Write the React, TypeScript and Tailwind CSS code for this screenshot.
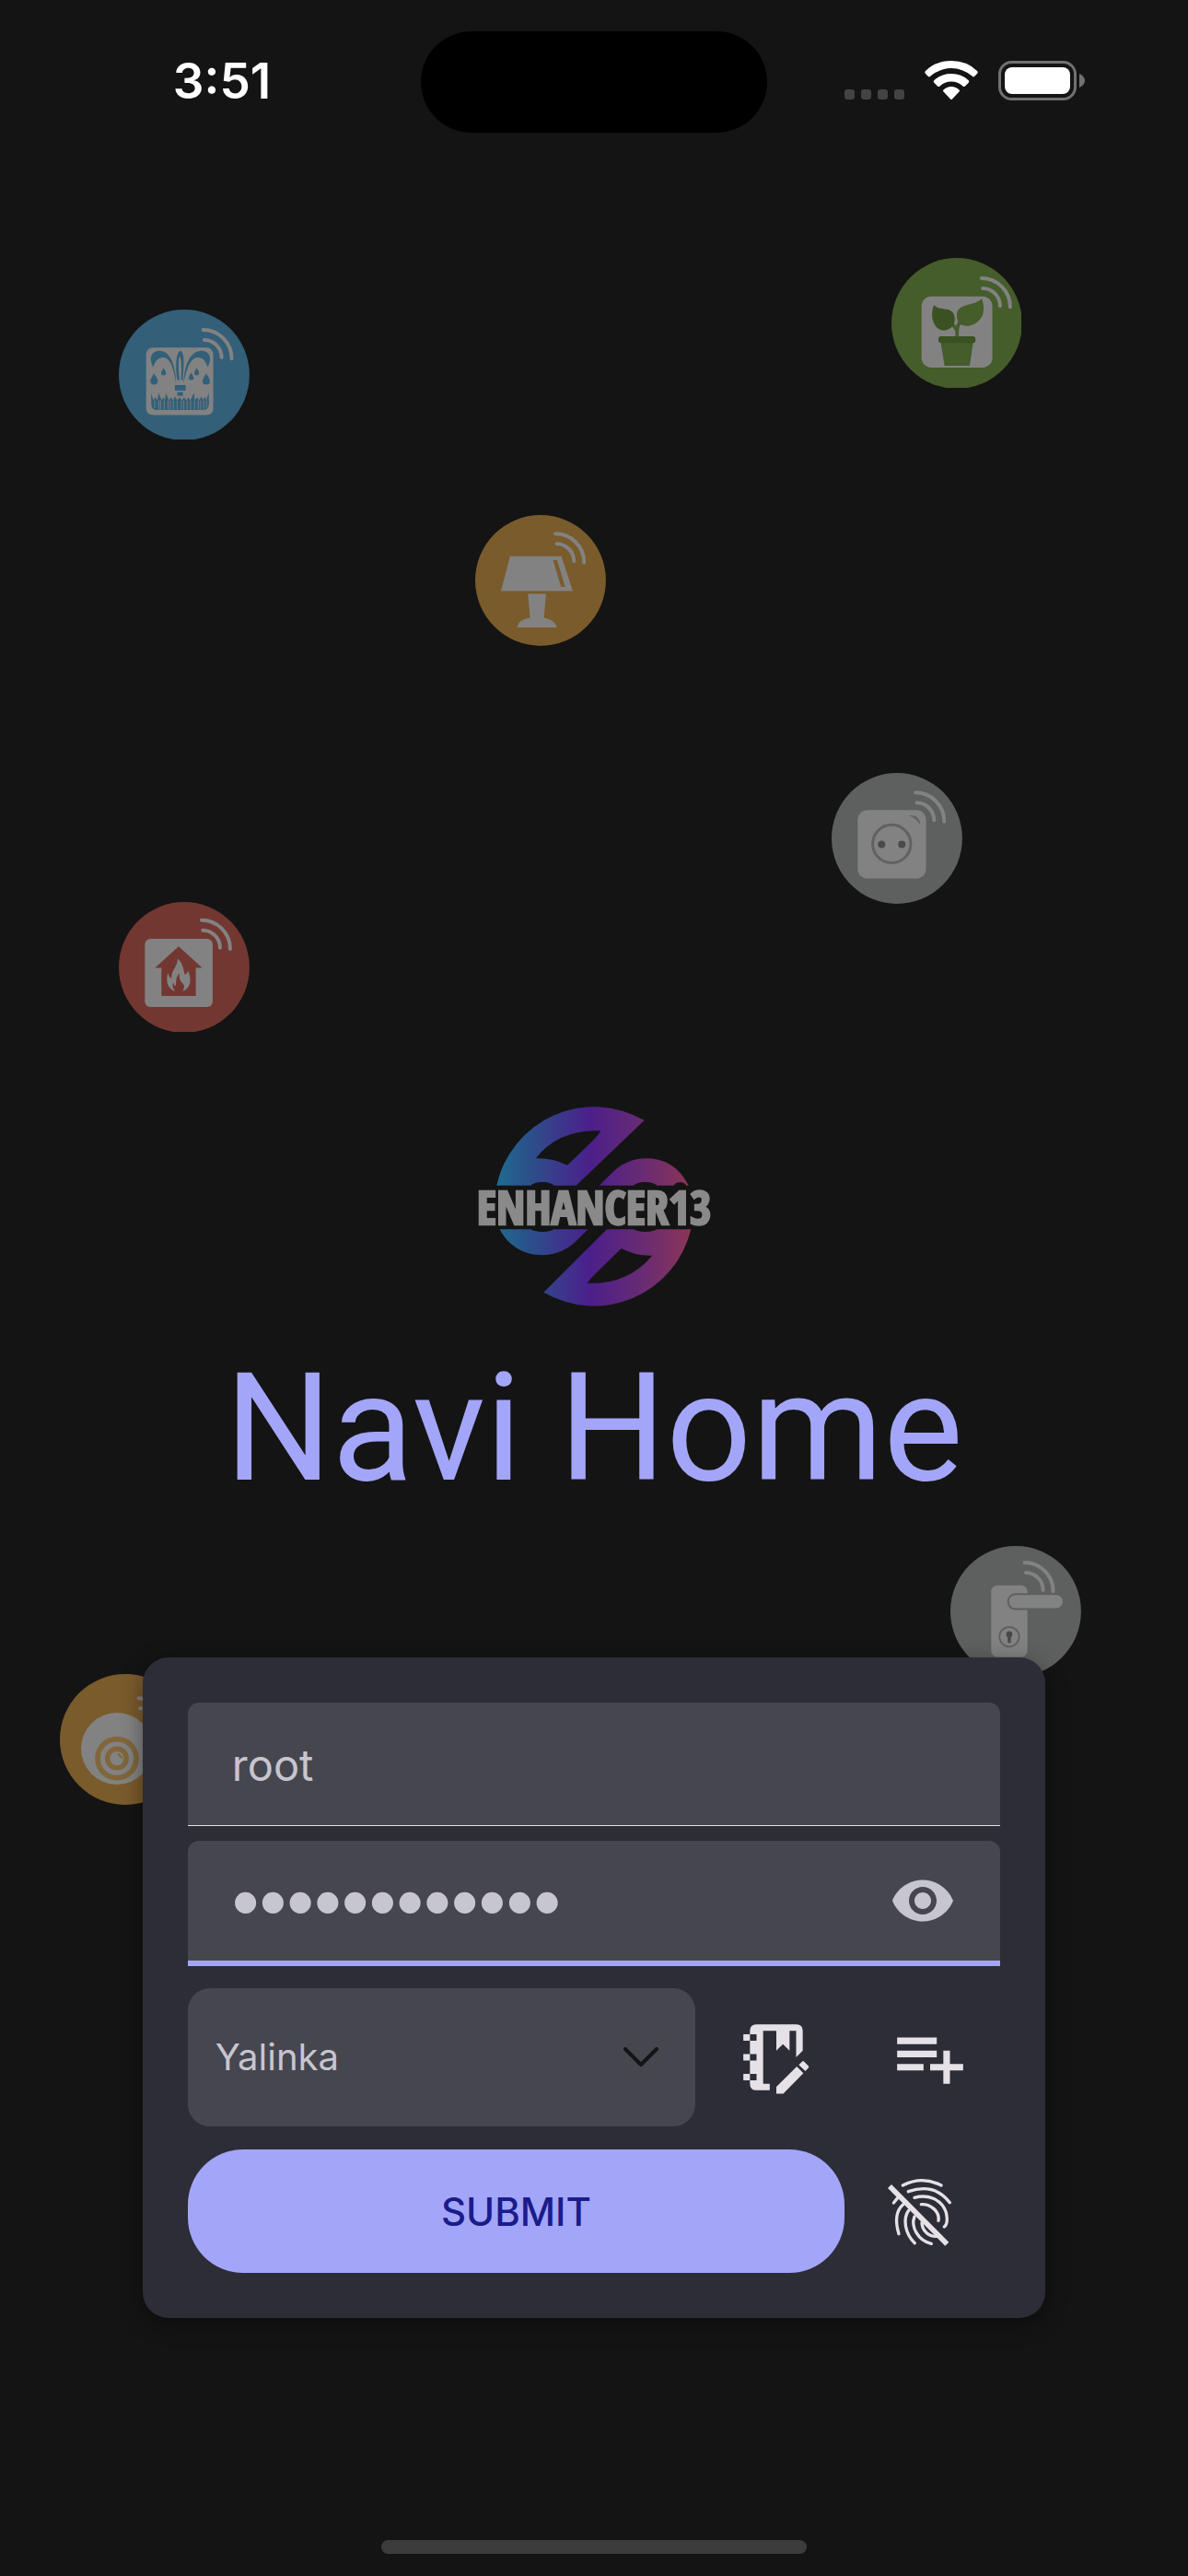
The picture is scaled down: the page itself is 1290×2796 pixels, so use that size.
import { useState } from "react";
import type { ReactNode } from "react";
import { MdVisibility } from "react-icons/md";

function Waves({ x, y }: { x: number; y: number }) {
  return (
    <g transform={`translate(${x} ${y})`} fill="none" stroke="#828282" strokeWidth="12" strokeLinecap="round">
      <path d="M0 0A93 94 0 0 1 93 94" />
      <path d="M4 33A57 57 0 0 1 60 90" />
    </g>
  );
}

function Disc({ place, box, color, children }: { place: string; box: string; color: string; children: ReactNode }) {
  const [x, y] = box.split(" ").map(Number);
  return (
    <svg className={`absolute w-[11%] ${place}`} viewBox={box} aria-hidden="true">
      <circle cx={x + 213} cy={y + 213} r="213" fill={color} />
      {children}
    </svg>
  );
}

function Devices() {
  return (
    <div className="pointer-events-none absolute inset-0">
      <Disc place="left-[10%] top-[12%]" box="87 78 426 426" color="#335f78">
        <Waves x={362} y={144} />
        <rect x="176" y="202" width="219" height="220" rx="22" fill="#828282" />
        <g fill="#335f78">
          <path d="M200 266C186 244 188 218 212 213C250 206 272 250 274 320C266 268 254 234 232 234C216 234 204 246 200 266Z" />
          <path d="M376 266C390 244 388 218 364 213C326 206 300 250 298 320C308 268 322 234 344 234C360 234 372 246 376 266Z" />
          <path d="M278 308C270 262 274 214 288 213C302 214 300 262 295 308L290 308C293 270 290 232 286 232C280 234 281 270 285 308Z" />
          <path d="M202 286Q214 304 214 311A12 12 0 0 1 190 311Q190 304 202 286Z" />
          <path d="M372 286Q384 304 384 311A12 12 0 0 1 360 311Q360 304 372 286Z" />
          <path d="M233 268Q241 281 241 285A8 7 0 0 1 225 285Q225 281 233 268Z" />
          <path d="M341 268Q349 281 349 285A8 7 0 0 1 333 285Q333 281 341 268Z" />
          <path d="M323 284Q331 297 331 301A8 7 0 0 1 315 301Q315 297 323 284Z" />
          <rect x="270" y="324" width="35" height="18" />
          <rect x="278" y="347" width="18" height="12" />
          <path d="M192 350L200 374L206 364L213 374L217 350L227 374L233 364L237 374L241 350L250 374L257 364L264 374L270 362L278 374L285 364L293 374L300 364L308 374L314 364L320 374L332 350L335 374L343 364L349 374L356 362L362 372L368 362L372 374L380 350L381 385Q380 400 368 405L206 405Q193 402 193 385Z" />
        </g>
        <path d="M204 374V400M217 374V404M223 374V404M235 374V404M248 374V404M255 374V404M265 374V404M277 374V404M291 374V404M299 374V404M310 374V404M321 374V404M334 374V404M346 374V404M354 374V404M364 374V404M373 374V397" stroke="#828282" strokeWidth="2.5" />
      </Disc>

      <Disc place="left-[75%] top-[10%]" box="84 60 426 426" color="#455c2b">
        <rect x="182" y="185" width="231" height="232" rx="32" fill="#828282" />
        <Waves x={378} y={126} />
        <path d="M298 318V300Q298 280 312 258M298 298Q292 284 282 276" fill="none" stroke="#455c2b" strokeWidth="11" />
        <path d="M223 213C238 234 284 214 290 252C294 288 264 300 246 295C214 284 211 238 223 213Z" fill="#3a5122" />
        <path d="M378 193C356 218 300 206 297 244C296 262 302 268 308 276C338 290 370 274 382 244C387 224 384 206 378 193Z" fill="#455c2b" />
        <path d="M244 330H351L339 411H257Z" fill="#455c2b" />
        <rect x="237" y="315" width="121" height="22" rx="9" fill="#3a5122" />
      </Disc>

      <Disc place="left-[40%] top-[20%]" box="78 57 426 426" color="#7a5b2c">
        <Waves x={340} y={118} />
        <g fill="#828282">
          <path d="M192 191H359L396 305H162Z" />
          <path d="M250 314H309L302 392Q337 398 345 423H214Q221 396 257 392Z" />
        </g>
        <path d="M332 204H345L371 291H358Z" fill="#7a5b2c" />
      </Disc>

      <Disc place="left-[70%] top-[30%]" box="69 57 426 426" color="#5e605f">
        <rect x="154" y="178" width="223" height="223" rx="32" fill="#828282" />
        <Waves x={343} y={121} />
        <circle cx="265" cy="288" r="62" fill="none" stroke="#616161" strokeWidth="9" />
        <circle cx="232" cy="290" r="12" fill="#4a4a4a" />
        <circle cx="298" cy="290" r="12" fill="#4a4a4a" />
        <path d="M320 196Q355 190 358 226Q342 202 320 196Z" fill="#616161" />
      </Disc>

      <Disc place="left-[10%] top-[35%]" box="57 57 426 426" color="#733731">
        <Waves x={327} y={116} />
        <rect x="142" y="177" width="221" height="222" rx="18" fill="#828282" />
        <path d="M252 202L329 272H308V363H196V272H175Z" fill="#733731" />
        <path d="M241 348C214 340 210 312 217 288Q220 302 229 308C226 280 248 272 249 242C262 252 268 272 272 294Q280 292 282 280C296 308 292 340 265 348C276 330 266 322 262 320Q254 312 254 290Q242 302 243 330Q236 330 235 320C230 330 234 340 241 348Z" fill="#828282" />
      </Disc>

      <Disc place="left-[80%] top-[60%]" box="96 84 426 426" color="#5e605f">
        <Waves x={338} y={138} />
        <rect x="229" y="212" width="118" height="234" rx="20" fill="#828282" />
        <rect x="284" y="241" width="181" height="49" rx="24" fill="#828282" stroke="#5e605f" strokeWidth="6" />
        <circle cx="288" cy="380" r="32" fill="none" stroke="#616161" strokeWidth="6" />
        <circle cx="288" cy="372" r="10" fill="#484848" />
        <rect x="283" y="376" width="10" height="24" rx="3" fill="#484848" />
      </Disc>

      <Disc place="left-[5%] top-[65%]" box="45 81 426 426" color="#7a5b2c">
        <Waves x={302} y={160} />
        <circle cx="231" cy="324" r="117" fill="#828282" />
        <g fill="none" stroke="#80663a">
          <circle cx="231" cy="356" r="63" strokeWidth="17" />
          <circle cx="231" cy="356" r="31" strokeWidth="16" />
          <path d="M236 342L247 353" strokeWidth="6" strokeLinecap="round" />
        </g>
      </Disc>
    </div>
  );
}

function Logo() {
  return (
    <svg className="w-[310px]" viewBox="0 0 930 780" role="img" aria-label="ENHANCER13">
      <defs>
        <linearGradient id="brand" gradientUnits="userSpaceOnUse" x1="148" y1="0" x2="782" y2="0">
          <stop offset="0" stopColor="#1f6b8f" />
          <stop offset="0.14" stopColor="#29548a" />
          <stop offset="0.48" stopColor="#4b1f8b" />
          <stop offset="0.75" stopColor="#692b73" />
          <stop offset="1" stopColor="#8b3557" />
        </linearGradient>
      </defs>
      <g fill="url(#brand)" fillRule="evenodd">
        <path d="M148 320A325 325 0 0 1 629 108L407 320ZM275 232Q330 230 378 254L450 185Q476 162 487 142Q350 136 275 232Z" />
        <path d="M158 463C185 515 235 547 295 547C345 547 385 524 410 498L446 463Z" />
        <path d="M482 320L530 273C560 245 600 232 635 232C700 232 745 265 773 320Z" />
        <path d="M507 463L301 668A325 325 0 0 0 781 463ZM554 525Q600 550 655 548Q575 644 443 638Q455 620 475 602Z" />
      </g>
      <g fill="#141414">
        <ellipse cx="297" cy="324" rx="38" ry="15" />
        <ellipse cx="632" cy="324" rx="38" ry="15" />
        <ellipse cx="297" cy="458" rx="38" ry="13" />
        <ellipse cx="632" cy="458" rx="38" ry="13" />
        <ellipse cx="745" cy="322" rx="20" ry="12" />
      </g>
      <text x="465" y="446" textAnchor="middle" fontFamily="'Open Sans Condensed', 'Open Sans', sans-serif" fontWeight="800" fontSize="150" fill="#8a8a8a" stroke="#8a8a8a" strokeWidth="7">
        ENHANCER13
      </text>
    </svg>
  );
}

function NotebookEdit() {
  return (
    <svg className="size-[86px]" viewBox="0 0 24 24" fill="currentColor" aria-hidden="true">
      <path fillRule="evenodd" d="M4 5V4Q4 2 6 2H18Q20 2 20 4V10L18 12V4H16V10L14 8L12 10V4H8V20H10V22H6Q4 22 4 20V19H6V17H4V13H6V11H4V7H6V5Z" />
      <path d="M2 5H4V7H2ZM2 11H4V13H2ZM2 17H4V19H2Z" />
      <path d="M12 23V20.9L18.2 14.8L20.2 16.8L14.1 23ZM18.8 14.3L19.8 13.3Q20.1 13 20.4 13.3L21.7 14.6Q22 14.9 21.7 15.2L20.8 16.2Z" />
    </svg>
  );
}

function PlaylistPlus() {
  return (
    <svg className="size-[86px]" viewBox="0 0 24 24" fill="currentColor" aria-hidden="true">
      <path d="M2 6H14V8H2ZM2 10H14V12H2ZM2 14H10V16H2ZM12 14H16V10H18V14H22V16H18V20H16V16H12Z" />
    </svg>
  );
}

function FingerprintOff() {
  return (
    <svg className="size-[86px]" viewBox="525 561 258 258" fill="none" stroke="currentColor" strokeWidth="10" strokeLinecap="round" aria-hidden="true">
      <path d="M601 606Q664 574 726 606" />
      <path d="M619 626Q704 597 754 662" />
      <path d="M639 646C680 634 728 650 742 694Q750 730 736 741" />
      <path d="M661 668C690 666 722 690 717 721" />
      <path d="M571 663L584 647" />
      <path d="M602 668Q568 698 588 764" />
      <path d="M620 688C600 714 608 764 640 794" />
      <path d="M639 708C626 740 650 786 694 796" />
      <path d="M663 728C664 754 686 774 712 772" />
      <path d="M558 609L745 797" strokeWidth="17" strokeLinecap="butt" />
    </svg>
  );
}

function StatusBar() {
  return (
    <header className="relative grid h-[178px] grid-cols-[1fr_376px_1fr] items-start pt-[34px] text-white">
      <div className="flex h-[108px] items-center justify-center pl-[25px] text-[53px] font-semibold leading-none">3:51</div>
      <div className="h-[110px] rounded-full bg-black" />
      <div className="flex h-[106px] items-center justify-end gap-[22px] pr-[112px]">
        <div className="flex gap-[7px] pt-[30px]">
          <i className="size-[11px] rounded-[3px] bg-[#434343]" />
          <i className="size-[11px] rounded-[3px] bg-[#434343]" />
          <i className="size-[11px] rounded-[3px] bg-[#434343]" />
          <i className="size-[11px] rounded-[3px] bg-[#434343]" />
        </div>
        <svg className="w-[58px]" viewBox="0 0 58 42" fill="#fff" aria-label="Wi-Fi">
          <path d="M29 0Q46 0 57 11Q58.500 12.500 57 14L54 17Q53 18 51.500 16.500Q41 8 29 8Q17 8 6.500 16.500Q5 18 4 17L1 14Q-.5 12.500 1 11Q12 0 29 0Z" />
          <path d="M29 14Q40 14 47.500 21Q49 22.500 47.500 24L44 27.500Q43 28.500 41.500 27.500Q36 22.500 29 22.500Q22 22.500 16.500 27.500Q15 28.500 14 27.500L10.500 24Q9 22.500 10.500 21Q18 14 29 14Z" />
          <path d="M29 28Q34 28 37.500 31.500Q38.500 32.500 37.500 33.500L30 41.500Q29 42.500 28 41.500L20.500 33.500Q19.500 32.500 20.500 31.500Q24 28 29 28Z" />
        </svg>
        <svg className="w-[94px]" viewBox="0 0 94 43" aria-label="Battery">
          <rect x="1.500" y="1.500" width="82" height="40" rx="13" fill="none" stroke="#717171" strokeWidth="3" />
          <rect x="7" y="7" width="71" height="29" rx="8" fill="#fff" />
          <path d="M88 14Q94 17 94 21.500Q94 26 88 29Z" fill="#717171" />
        </svg>
      </div>
    </header>
  );
}

export default function App() {
  const [shown, setShown] = useState(false);
  return (
    <div className="relative flex min-h-screen flex-col bg-[#141414] font-['Inter',sans-serif]">
      <Devices />
      <StatusBar />
      <main className="relative mt-auto flex flex-col items-center">
        <Logo />
        <h1 className="mb-[137px] font-['Roboto',sans-serif] text-[163px] leading-[222px] text-[#a3a6f8]">Navi Home</h1>
        <form className="flex w-[76%] flex-col rounded-[28px] bg-[#2d2d37] p-[49px] shadow-[0_6px_24px_rgba(0,0,0,0.4)]" onSubmit={(e) => e.preventDefault()}>
          <input aria-label="Username" defaultValue="root" className="h-[134px] w-full rounded-t-xl border-b border-[#e5e1e6] bg-[#46464f] px-12 pt-[2px] text-[47px] text-[#c7c5d0] outline-none" />
          <div className="mt-4 flex h-[136px] items-center rounded-t-xl border-b-6 border-[#a3a6f8] bg-[#46464f] px-12">
            <input
              aria-label="Password"
              type={shown ? "text" : "password"}
              defaultValue="homekeeper42"
              className={`h-full min-w-0 flex-1 bg-transparent pt-1 text-[#c7c5d0] outline-none ${shown ? "text-[47px]" : "font-['Liberation_Sans',sans-serif] text-[85px]"}`}
            />
            <button type="button" aria-label="Show password" onClick={() => setShown(!shown)} className="text-[#c7c5d0]">
              <MdVisibility className="size-[72px]" />
            </button>
          </div>
          <div className="mt-6 flex items-center">
            <div className="relative flex-1">
              <select aria-label="Server" className="h-[150px] w-full appearance-none rounded-3xl bg-[#46464f] pl-[30px] text-[40px] text-[#c7c5d0] outline-none">
                <option>Yalinka</option>
              </select>
              <svg className="pointer-events-none absolute right-[40px] top-[64px] w-[38px]" viewBox="0 0 38 22" fill="none" stroke="#141414" strokeWidth="4" strokeLinecap="round" strokeLinejoin="round" aria-hidden="true">
                <path d="M2 2L19 19L36 2" />
              </svg>
            </div>
            <button type="button" aria-label="Edit servers" className="ml-[45px] text-[#e5e1e6]">
              <NotebookEdit />
            </button>
            <button type="button" aria-label="Add server" className="ml-[81px] mr-[33px] text-[#e5e1e6]">
              <PlaylistPlus />
            </button>
          </div>
          <div className="mt-[25px] flex items-center">
            <button type="submit" className="h-[134px] flex-1 rounded-[60px] bg-[#a3a6f8] text-[42px] font-medium text-[#1a1c8c]">SUBMIT</button>
            <button type="button" aria-label="Fingerprint sign-in off" className="ml-[38px] mr-[45px] text-[#e5e1e6]">
              <FingerprintOff />
            </button>
          </div>
        </form>
      </main>
      <footer className="flex h-[280px] items-end justify-center pb-6">
        <div className="h-[15px] w-[462px] rounded-full bg-[#3c3c3c]" />
      </footer>
    </div>
  );
}
